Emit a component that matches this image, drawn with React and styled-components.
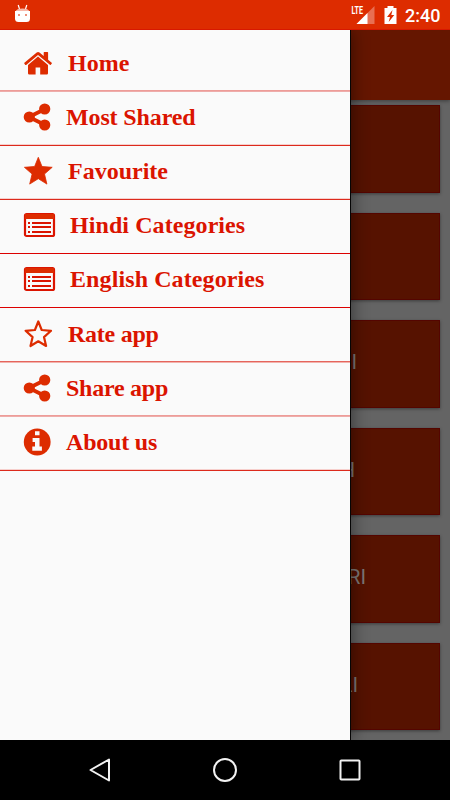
import React from 'react';
import styled, { createGlobalStyle } from 'styled-components';

const colors = {
  primary: '#dd2c00',
  label: '#db1400',
  drawer: '#fafafa',
  appBar: '#651600',
  card: '#561200',
  page: '#646464',
  cardText: '#7c7776',
};

const GlobalStyle = createGlobalStyle`
  * {
    box-sizing: border-box;
  }
  body {
    margin: 0;
    overflow: hidden;
  }
`;

const Screen = styled.div`
  width: 450px;
  height: 800px;
  display: grid;
  grid-template-rows: 30px 710px 60px;
  font-family: Roboto, 'Liberation Sans', sans-serif;
  overflow: hidden;
`;

const StatusBar = styled.header`
  display: flex;
  align-items: flex-start;
  justify-content: space-between;
  background: ${colors.primary};
  color: #fff;
  padding: 4px 10px 0 14px;
  border-bottom: 1px solid #d81800;
`;

const StatusIcons = styled.div`
  display: flex;
  align-items: flex-start;
`;

const Clock = styled.span`
  width: 35px;
  margin-left: 8px;
  font-size: 18px;
  font-weight: 500;
  line-height: 24px;
  white-space: nowrap;
`;

const Body = styled.main`
  position: relative;
  background: ${colors.page};
  overflow: hidden;
`;

const AppBar = styled.div`
  height: 70px;
  background: ${colors.appBar};
  box-shadow: 0 1px 4px rgba(0, 0, 0, 0.4);
`;

const CardList = styled.div`
  display: flex;
  flex-direction: column;
  gap: 20px;
  padding: 5px 10px;
`;

const Card = styled.div`
  display: flex;
  align-items: center;
  justify-content: flex-end;
  flex: 0 0 87.5px;
  padding: 0 ${(props) => props.$inset}px 3px 0;
  background: ${colors.card};
  border: 1px solid #540500;
  box-shadow: 0 1px 3px rgba(0, 0, 0, 0.4);
  color: ${colors.cardText};
  font-size: 20.5px;
`;

const Drawer = styled.nav`
  position: absolute;
  top: 0;
  left: 0;
  width: 350px;
  height: 100%;
  padding-top: 8px;
  background: ${colors.drawer};
  box-shadow: 1px 0 0 #050505, 2px 0 16px rgba(0, 0, 0, 0.45);
`;

const MenuRow = styled.div`
  display: flex;
  align-items: center;
  height: ${(props) => props.$height || 54}px;
  padding: 0 0 ${(props) => props.$lift || 4}px 23px;
  color: ${colors.primary};
  /* hairline falls between two device pixels on some rows */
  background: linear-gradient(
      ${(props) => props.$rule[0]} 50%,
      ${(props) => props.$rule[1]} 50%
    )
    bottom / 100% 2px no-repeat;
`;

const Label = styled.span`
  margin-left: ${(props) => props.$gap}px;
  color: ${colors.label};
  font-family: 'Liberation Serif', serif;
  font-size: 24px;
  font-weight: 700;
  line-height: 30px;
  letter-spacing: ${(props) => props.$spacing}px;
  white-space: nowrap;
`;

const NavBar = styled.footer`
  display: flex;
  align-items: center;
  justify-content: space-around;
  padding: 0 38px;
  background: #000;
`;

const HomeIcon = () => (
  <svg width="30" height="26" viewBox="0 0 30 26" fill="currentColor">
    <path d="M5 15 15 6.6 25 15v8.3a1.2 1.2 0 0 1-1.2 1.2H17.2V17.5h-4.6v7H6.2A1.2 1.2 0 0 1 5 23.3z" />
    <path d="M1.4 12.8 13.7 2.6q1.4-1.1 2.8 0L20.7 6V2.5q0-.6.6-.6h3.2q.6 0 .6.6V9.7l3.6 3.1q.5.4.1.8l-1 1.2q-.4.4-.9 0L15 5 3.2 14.9q-.5.4-.9 0l-1-1.3q-.3-.4.1-.8z" />
  </svg>
);

const ShareIcon = () => (
  <svg width="28" height="28" viewBox="0 0 28 28" fill="currentColor">
    <path d="M6 14 22 6M6 14l16 8" stroke="currentColor" strokeWidth="3.8" />
    <circle cx="6.3" cy="14" r="5.6" />
    <circle cx="21.7" cy="6" r="5.6" />
    <circle cx="21.7" cy="22" r="5.6" />
  </svg>
);

const StarIcon = ({ outline }) => (
  <svg width="30" height="30" viewBox="0 0 30 30">
    <path
      d={
        outline
          ? 'M15.3 2.5 18.7 11l9.300.8-7 6.300 2.100 8.900-7.800-4.700-7.800 4.700 2.100-8.900-7-6.300 9.300-.8z'
          : 'M15.3 1.3 19 10.5l10.200.8-7.7 6.700 2.400 10.100-8.600-5.400-8.600 5.400L9.100 18 1.400 11.300l10.200-.8z'
      }
      fill={outline ? 'none' : 'currentColor'}
      stroke="currentColor"
      strokeWidth={outline ? 2.2 : 0.8}
      strokeLinejoin="round"
    />
  </svg>
);

const ListIcon = () => (
  <svg width="33" height="26" viewBox="0 0 33 26" fill="currentColor">
    <rect x="2" y="2" width="29" height="22" rx="1.6" fill="none" stroke={colors.label} strokeWidth="2.2" />
    <path d="M2 2h29v5H2z" />
    <g fill={colors.label}>
      <path d="M5 10h2v2H5zM5 14h2v2H5zM5 19h2v2H5z" />
      <path d="M9 10h19v2H9zM9 14h19v2H9zM9 19h19v2H9z" />
    </g>
  </svg>
);

const InfoIcon = () => (
  <svg width="28" height="28" viewBox="0 0 28 28">
    <circle cx="14.2" cy="14" r="13.4" fill="currentColor" />
    <path d="M12 3.2h4.5v4.1H12zM9.6 10h6.9v8.6h2.4v4.2H9.3v-4.2H12V14H9.6z" fill="#fafafa" />
  </svg>
);

const DroidIcon = () => (
  <svg width="17" height="19" viewBox="0 0 17 19">
    <path d="M4.2 1l1.3 4M12.8 1l-1.3 4" stroke="#fff" strokeWidth="1.2" />
    <path d="M1.5 7.5Q2.5 4.4 8.5 4.4t7 3.1z" fill="#f7b9ab" />
    <path d="M1 7h15v7.5Q16 18 12.5 18h-8Q1 18 1 14.5z" fill="#fff" />
    <path d="M4 10h2v2H4zM11 10h2v2h-2z" fill="#ee8f7a" />
  </svg>
);

const SignalIcon = () => (
  <svg width="33" height="22" viewBox="0 0 33 22">
    <path d="M23.5 2v18H5.500z" fill="#fff" opacity="0.32" />
    <path d="M16.5 9v11H5.500z" fill="#fff" />
    <text x="0.5" y="10" fill="#fff" fontSize="10.5" fontWeight="700" textLength="11.5" lengthAdjust="spacingAndGlyphs">
      LTE
    </text>
  </svg>
);

const BatteryIcon = () => (
  <svg width="13" height="22" viewBox="0 0 13 22">
    <path d="M3.5 2h6v2H12.5v16H.5V4h3z" fill="#fff" />
    <path d="M8.5 6 3 13h3l-1.3 5L10.3 11h-3z" fill={colors.primary} />
  </svg>
);

const rules = {
  split: ['#ed9c98', '#eeacaa'],
  low: ['#f6cfcc', '#dc2a1c'],
  crisp: [colors.drawer, '#dc0000'],
  high: ['#e5655c', '#f2b3ae'],
};

const menu = [
  { text: 'Home', icon: <HomeIcon />, gap: 15, spacing: 0, rule: rules.split },
  { text: 'Most Shared', icon: <ShareIcon />, gap: 15, spacing: -0.13, rule: rules.low },
  { text: 'Favourite', icon: <StarIcon />, gap: 15, spacing: 0, rule: rules.low },
  { text: 'Hindi Categories', icon: <ListIcon />, gap: 14, spacing: 0.08, rule: rules.crisp, lift: 5 },
  { text: 'English Categories', icon: <ListIcon />, gap: 14, spacing: 0.1, rule: rules.crisp, lift: 5 },
  { text: 'Rate app', icon: <StarIcon outline />, gap: 15, spacing: -0.25, rule: rules.high, height: 55 },
  { text: 'Share app', icon: <ShareIcon />, gap: 15, spacing: -0.25, rule: rules.split },
  { text: 'About us', icon: <InfoIcon />, gap: 15, spacing: -0.2, rule: rules.low },
];

const cards = [
  { text: '', inset: 0 },
  { text: '', inset: 0 },
  { text: 'I', inset: 82 },
  { text: 'H', inset: 84 },
  { text: 'RI', inset: 73 },
  { text: 'LI', inset: 81 },
];

function App() {
  return (
    <Screen>
      <GlobalStyle />
      <StatusBar>
        <DroidIcon />
        <StatusIcons>
          <SignalIcon />
          <BatteryIcon />
          <Clock>2:40</Clock>
        </StatusIcons>
      </StatusBar>
      <Body>
        <AppBar />
        <CardList>
          {cards.map((card, index) => (
            <Card key={index} $inset={card.inset}>
              {card.text}
            </Card>
          ))}
        </CardList>
        <Drawer>
          {menu.map((item) => (
            <MenuRow key={item.text} $rule={item.rule} $height={item.height} $lift={item.lift}>
              {item.icon}
              <Label $gap={item.gap} $spacing={item.spacing}>
                {item.text}
              </Label>
            </MenuRow>
          ))}
        </Drawer>
      </Body>
      <NavBar>
        <svg width="24" height="26" viewBox="0 0 24 26" fill="none" stroke="#f2f2f2" strokeWidth="2">
          <path d="M21 2.5v21L2.5 13z" strokeLinejoin="round" />
        </svg>
        <svg width="26" height="26" viewBox="0 0 26 26" fill="none" stroke="#f2f2f2" strokeWidth="2">
          <circle cx="13" cy="13" r="11" />
        </svg>
        <svg width="24" height="24" viewBox="0 0 24 24" fill="none" stroke="#f2f2f2" strokeWidth="2">
          <rect x="2.5" y="2.5" width="19" height="19" rx="0.8" />
        </svg>
      </NavBar>
    </Screen>
  );
}

export default App;
